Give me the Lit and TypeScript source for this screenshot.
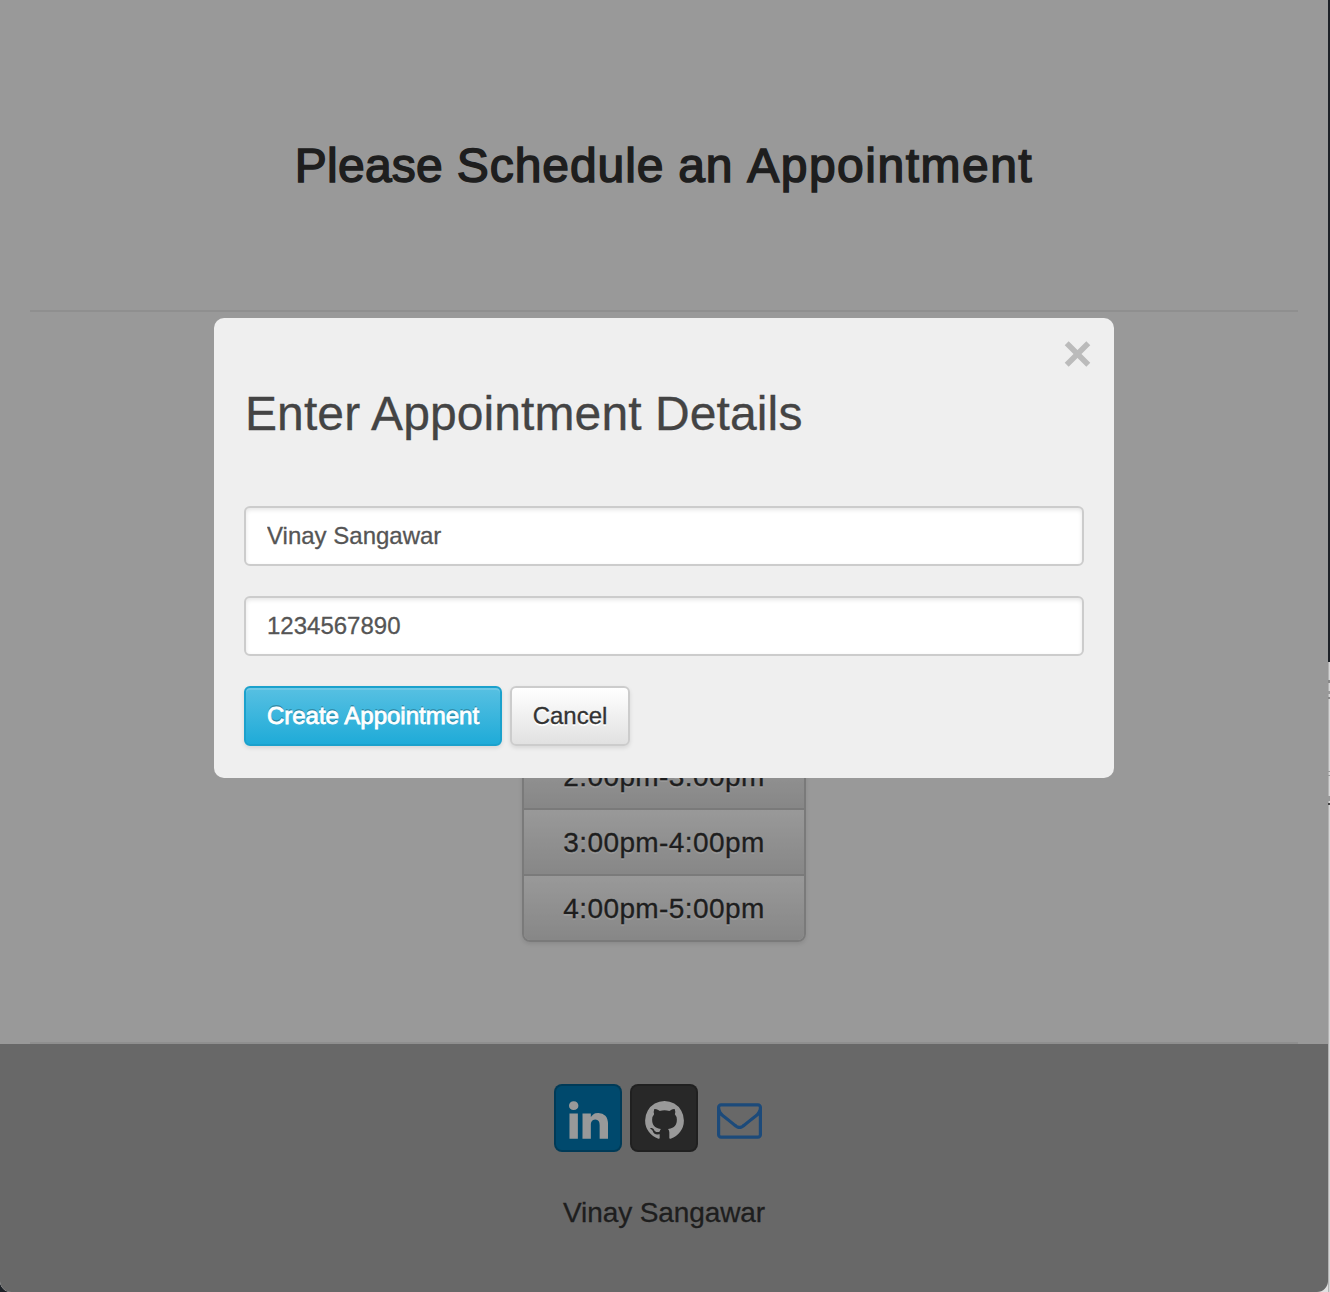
import { LitElement, html, css, svg } from "lit";
import { customElement, state } from "lit/decorators.js";

const linkedin = svg`<path d="M349 625v991h-330v-991h330zm21-306q1 73-50.500 122t-135.500 49h-2q-82 0-132-49t-50-122q0-74 51.500-122.500t134.500-48.500 133 48.500 51 122.500zm1166 729v568h-329v-530q0-105-40.500-164.500t-126.500-59.500q-63 0-105.500 34.500t-63.500 85.500q-11 30-11 81v553h-329q2-399 2-647t-1-296l-1-48h329v144h-2q20-32 41-56t56.500-52 87-43.500 114.500-15.500q171 0 275 113.500t104 332.500z"/>`;
const github = svg`<path d="M768 128q209 0 385.500 103t279.500 279.500 103 385.500q0 251-146.500 451.500t-378.500 277.500q-27 5-40-7t-13-30q0-3 .5-76.500t.5-134.500q0-97-52-142 57-6 102.500-18t94-39 81-66.500 53-105 20.500-150.500q0-119-79-206 37-91-8-204-28-9-81 11t-92 44l-38 24q-93-26-192-26t-192 26q-16-11-42.500-27t-83.500-38.500-85-13.500q-45 113-8 204-79 87-79 206 0 85 20.500 150t52.500 105 80.500 67 94 39 102.500 18q-39 36-49 103-21 10-45 15t-57 5-65.500-21.500-55.500-62.500q-19-32-48.500-52t-49.500-24l-20-3q-21 0-29 4.500t-5 11.500 9 14 13 12l7 5q22 10 43.500 38t31.500 51l10 23q13 38 44 61.500t67 30 69.500 7 55.500-3.500l23-4q0 38 .5 88.500t.5 54.500q0 18-13 30t-40 7q-232-77-378.500-277.500t-146.500-451.500q0-209 103-385.500t279.500-279.500 385.500-103z"/>`;
const envelope = svg`<path d="M1664 1504v-768q-32 36-69 66-268 206-426 338-51 43-83 67t-86.500 48.500-102.500 24.500h-2q-48 0-102.500-24.500t-86.500-48.500-83-67q-158-132-426-338-37-30-69-66v768q0 13 9.500 22.500t22.500 9.500h1472q13 0 22.500-9.500t9.500-22.500zm0-1051v-24.500l-.5-13-3-12.500-5.500-9-9-7.500-14-2.500h-1472q-13 0-22.500 9.500t-9.500 22.500q0 168 147 284 193 152 401 317 6 5 35 29.500t46 37.500 44.500 31.500 50.500 27.500 43 9h2q20 0 43-9t50.500-27.500 44.500-31.500 46-37.500 35-29.500q208-165 401-317 54-43 100.500-115.500t46.500-131.500zm128-37v1088q0 66-47 113t-113 47h-1472q-66 0-113-47t-47-113v-1088q0-66 47-113t113-47h1472q66 0 113 47t47 113z"/>`;

@customElement("appointment-dialog")
class AppointmentDialog extends LitElement {
  static styles = css`
    :host {
      display: flex;
      flex-direction: column;
      box-sizing: border-box;
      width: 900px;
      height: 460px;
      padding: 22px 30px 32px;
      border-radius: 10px;
      background: #efefef;
    }
    .close {
      display: flex;
      align-self: flex-end;
      width: 28px;
      height: 28px;
      margin-right: -8px;
      padding: 0;
      border: 0;
      background: none;
    }
    .close svg {
      width: 28px;
      height: 28px;
    }
    h2 {
      margin: 18px 0 0 1px;
      font-size: 48px;
      line-height: 56px;
      font-weight: 400;
      letter-spacing: 0.1px;
      color: #444;
      -webkit-text-stroke: 0.3px currentColor;
    }
    .fields {
      display: flex;
      flex-direction: column;
      gap: 30px;
      margin-top: 64px;
    }
    input {
      box-sizing: border-box;
      width: 100%;
      height: 60px;
      padding: 0 21px;
      border: 2px solid #ccc;
      border-radius: 6px;
      background: #fff;
      box-shadow: inset 0 2px 4px rgba(0, 0, 0, 0.1);
      font: 24px "Liberation Sans", Arial, sans-serif;
      color: #555;
      -webkit-text-stroke: 0.3px currentColor;
      outline: none;
    }
    .actions {
      display: flex;
      gap: 8px;
      margin-top: 30px;
    }
    .btn {
      box-sizing: border-box;
      height: 60px;
      padding: 0;
      border: 2px solid #ccc;
      border-radius: 6px;
      background: linear-gradient(#fff, #e1e1e1);
      box-shadow: 0 2px 4px rgba(0, 0, 0, 0.1);
      font: 24px "Liberation Sans", Arial, sans-serif;
      color: #333;
      text-shadow: 0 2px 0 #fff;
      -webkit-text-stroke: 0.3px currentColor;
    }
    .cancel {
      width: 120px;
    }
    .primary {
      width: 258px;
      border-color: #1ba1cc;
      background: linear-gradient(#57c0e2, #1fabd8);
      box-shadow: inset 0 2px 0 rgba(255, 255, 255, 0.15), 0 2px 4px rgba(0, 0, 0, 0.1);
      color: #fff;
      text-shadow: 0 -2px 0 rgba(0, 0, 0, 0.25);
      -webkit-text-stroke-width: 0.8px;
    }
  `;

  @state() fields = ["Vinay Sangawar", "1234567890"];

  render() {
    return html`
      <button class="close">
        <svg viewBox="0 0 28 28"><path d="M2.700 3.200 24.300 24.800M24.300 3.200 2.700 24.800" stroke="#bbb" stroke-width="5.600" /></svg>
      </button>
      <h2>Enter Appointment Details</h2>
      <div class="fields">${this.fields.map((value) => html`<input type="text" .value=${value} />`)}</div>
      <div class="actions">
        <button class="btn primary">Create Appointment</button>
        <button class="btn cancel">Cancel</button>
      </div>
    `;
  }
}

@customElement("app-root")
class AppRoot extends LitElement {
  static styles = css`
    :host {
      display: block;
      position: relative;
      width: 1330px;
      height: 1292px;
      overflow: hidden;
      font-family: "Liberation Sans", Arial, sans-serif;
      /* Neighbouring windows that show past the page's right edge and corners */
      background:
        linear-gradient(#888, #888) 1328px 680px / 2px 3px no-repeat,
        linear-gradient(#999, #999) 1328px 691px / 2px 3px no-repeat,
        linear-gradient(#888, #888) 1328px 697px / 2px 2px no-repeat,
        linear-gradient(#999, #999) 1328px 771px / 2px 1px no-repeat,
        linear-gradient(#999, #999) 1328px 775px / 2px 1px no-repeat,
        linear-gradient(#999, #999) 1328px 796px / 2px 5px no-repeat,
        linear-gradient(#444, #444) 1328px 803px / 2px 2px no-repeat,
        linear-gradient(90deg, #b3b3b3 1px, #d6d6d6 1px) 1328px 662px / 2px 630px no-repeat,
        linear-gradient(#e0e0e0, #e0e0e0) 1300px 1270px / 30px 22px no-repeat,
        #1d2127;
    }
    .page {
      display: flex;
      flex-direction: column;
      width: 1328px;
      height: 1292px;
      border-radius: 0 0 11px 11px;
      overflow: hidden;
      background: #fff;
      color: #333;
    }
    header {
      display: flex;
      justify-content: center;
      box-sizing: border-box;
      height: 310px;
      padding-top: 138px;
    }
    h1 {
      margin: 0;
      font-size: 48px;
      line-height: 56px;
      font-weight: 400;
      letter-spacing: 0.95px;
      word-spacing: -0.6px;
      -webkit-text-stroke: 1.5px currentColor;
    }
    .tight {
      letter-spacing: 0.25px;
    }
    .wide {
      letter-spacing: 1.5px;
    }
    .rule {
      flex: none;
      height: 2px;
      margin: 0 30px;
      background: #eee;
    }
    main {
      display: flex;
      flex: 1;
      justify-content: center;
      align-items: flex-end;
      padding-bottom: 100px;
    }
    .slots {
      display: flex;
      flex-direction: column;
      width: 280px;
      border: 2px solid #ccc;
      border-radius: 8px;
      overflow: hidden;
      box-shadow: 0 2px 4px rgba(0, 0, 0, 0.1);
    }
    .slot {
      height: 64px;
      border-top: 2px solid #ccc;
      background: linear-gradient(#fff, #e1e1e1);
      font-size: 28px;
      line-height: 66px;
      letter-spacing: 0.42px;
      text-align: center;
      text-shadow: 0 2px 0 #fff;
      -webkit-text-stroke: 0.3px currentColor;
    }
    .slot:first-child {
      border-top: 0;
    }
    footer {
      display: flex;
      flex-direction: column;
      align-items: center;
      box-sizing: border-box;
      height: 248px;
      padding-top: 40px;
      background: #aeaeae;
    }
    .social {
      display: flex;
      gap: 8px;
    }
    .icon {
      display: flex;
      align-items: center;
      justify-content: center;
      box-sizing: border-box;
      width: 68px;
      height: 68px;
      border: 2px solid transparent;
      border-radius: 8px;
      color: #fff;
      fill: currentColor;
    }
    .linkedin {
      background: #007bb6;
      border-color: rgba(0, 0, 0, 0.2);
      background-clip: border-box;
    }
    .github {
      background: #444;
      border-color: rgba(0, 0, 0, 0.2);
    }
    .mail {
      padding: 5px 1px 0 0;
      color: #2f7ccc;
    }
    .glyph {
      width: 39px;
      height: 38px;
      margin-top: 4px;
    }
    .mail .glyph {
      width: 45px;
      height: 36px;
      margin-top: 0;
    }
    .name {
      margin-top: 45px;
      font-size: 28px;
      line-height: 32px;
      letter-spacing: -0.1px;
      -webkit-text-stroke: 0.3px currentColor;
    }
    .backdrop {
      position: absolute;
      left: 0;
      top: 0;
      width: 1328px;
      height: 1292px;
      border-radius: 0 0 11px 11px;
      background: rgba(0, 0, 0, 0.4);
    }
    appointment-dialog {
      position: absolute;
      left: 214px;
      top: 318px;
    }
  `;

  @state() slots = ["2:00pm-3:00pm", "3:00pm-4:00pm", "4:00pm-5:00pm"];

  render() {
    return html`
      <div class="page">
        <header><h1><span class="tight">Please</span> Schedule an <span class="wide">Appointment</span></h1></header>
        <div class="rule"></div>
        <main>
          <div class="slots">${this.slots.map((slot) => html`<div class="slot">${slot}</div>`)}</div>
        </main>
        <div class="rule"></div>
        <footer>
          <div class="social">
            <a class="icon linkedin"><svg class="glyph" viewBox="0 148 1536 1468">${linkedin}</svg></a>
            <a class="icon github"><svg class="glyph" viewBox="0 128 1536 1505">${github}</svg></a>
            <a class="icon mail"><svg class="glyph" viewBox="0 256 1792 1408">${envelope}</svg></a>
          </div>
          <div class="name">Vinay Sangawar</div>
        </footer>
      </div>
      <div class="backdrop"></div>
      <appointment-dialog></appointment-dialog>
    `;
  }
}
